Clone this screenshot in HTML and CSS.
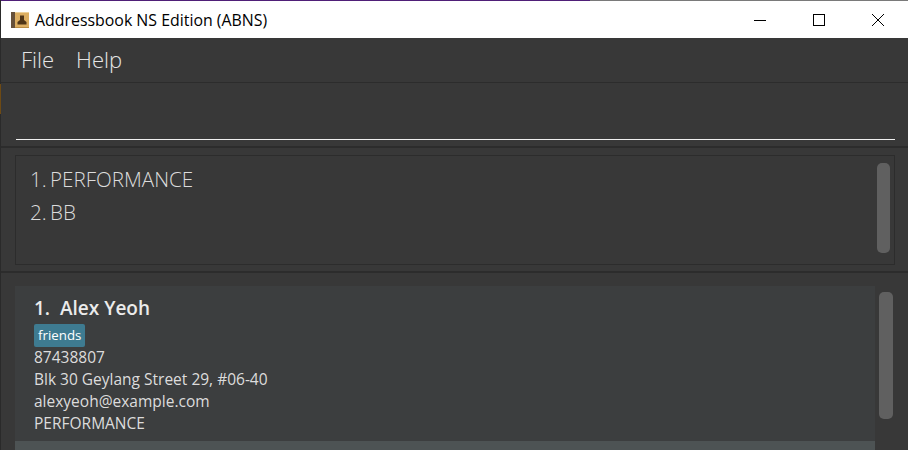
FILE: index.html
```html
<!DOCTYPE html>
<html lang="en">
<head>
    <meta charset="UTF-8">
    <title>Addressbook NS Edition (ABNS)</title>
    <link rel="stylesheet" href="styles.css">
</head>
<body>
    <div class="accent-line"><div class="accent-purple"></div></div>
    <div class="edge-sliver"></div>

    <header class="titlebar">
        <svg class="app-icon" width="18" height="16" viewBox="0 0 18 16">
            <rect x="0" y="0" width="18" height="16" fill="#dcae62"/>
            <rect x="0" y="0" width="4" height="16" fill="#66503a"/>
            <rect x="4" y="0" width="14" height="1" fill="#ecd09a"/>
            <rect x="4" y="15" width="14" height="1" fill="#b98c45"/>
            <path d="M9 3.5H13V8L15.5 10V12.5H6.5V10L9 8Z" fill="#4f3518"/>
        </svg>
        <span class="app-title">Addressbook NS Edition (ABNS)</span>
        <div class="window-buttons">
            <svg width="14" height="14" viewBox="0 0 14 14"><path d="M1 7.5H13" stroke="#000" stroke-width="1"/></svg>
            <svg width="14" height="14" viewBox="0 0 14 14"><rect x="1.5" y="1.5" width="11" height="11" fill="none" stroke="#000" stroke-width="1"/></svg>
            <svg width="14" height="14" viewBox="0 0 14 14"><path d="M1 1L13 13M13 1L1 13" stroke="#000" stroke-width="1"/></svg>
        </div>
    </header>

    <nav class="menubar">
        <span class="menu-item">File</span>
        <span class="menu-item">Help</span>
    </nav>

    <section class="command-pane">
        <div class="command-input"></div>
    </section>

    <section class="result-pane">
        <div class="result-box">
            <div class="result-text">
                <p>1. PERFORMANCE</p>
                <p>2. BB</p>
            </div>
            <div class="scroll-thumb result-thumb"></div>
        </div>
    </section>

    <section class="list-pane">
        <div class="cards">
            <article class="card">
                <h2 class="card-name">1.&nbsp; Alex Yeoh</h2>
                <div class="tags"><span class="tag">friends</span></div>
                <p class="card-line">87438807</p>
                <p class="card-line">Blk 30 Geylang Street 29, #06-40</p>
                <p class="card-line">alexyeoh@example.com</p>
                <p class="card-line">PERFORMANCE</p>
            </article>
            <div class="card-next"></div>
        </div>
        <div class="scroll-thumb list-thumb"></div>
    </section>
</body>
</html>
```

FILE: styles.css
```css
html, body {
    height: 100%;
}

body {
    margin: 0;
    overflow: hidden;
    display: flex;
    flex-direction: column;
    font-family: "Open Sans", "Noto Sans", sans-serif;
    background-color: #383838;
    border-left: 1px solid #2a2a2a;
    box-sizing: border-box;
}

p, h2 {
    margin: 0;
}

.accent-line {
    height: 1px;
    margin-left: -1px;
    background-color: #7a7a7a;
}

.accent-purple {
    width: 590px;
    height: 1px;
    background-color: #4f1f78;
}

/* bit of the window behind, shows through at the left edge */
.edge-sliver {
    position: absolute;
    left: 0;
    top: 84px;
    width: 1px;
    height: 30px;
    background-color: #6e4a14;
}

.titlebar {
    height: 37px;
    background-color: #ffffff;
    display: flex;
    align-items: center;
    padding-left: 10px;
    flex-shrink: 0;
}

.app-icon {
    margin-right: 6px;
}

.app-title {
    font-family: "Open Sans", sans-serif;
    font-size: 15.9px;
    color: #000000;
}

.window-buttons {
    margin-left: auto;
    display: flex;
    gap: 45px;
    padding-right: 23px;
    margin-top: 1px;
}

.menubar {
    height: 42px;
    padding: 0 0 2px 20px;
    flex-shrink: 0;
    display: flex;
    align-items: center;
    gap: 22px;
    border-bottom: 1px solid #2c2c2c;
    box-sizing: content-box;
}

.menu-item {
    font-size: 22px;
    font-weight: 300;
    color: #e6e6e6;
}

.command-pane {
    height: 65px;
    flex-shrink: 0;
    padding: 0 13px 0 15px;
    border-bottom: 2px solid #2c2c2c;
    box-sizing: border-box;
}

.command-input {
    height: 56px;
    border-bottom: 1px solid #f0f0f0;
}

.result-pane {
    height: 125px;
    flex-shrink: 0;
    padding: 7px 13px 6px 14px;
    border-bottom: 2px solid #2c2c2c;
    box-sizing: border-box;
}

.result-box {
    height: 110px;
    box-sizing: border-box;
    border: 1px solid #2c2c2c;
    display: flex;
    justify-content: space-between;
    padding: 7px 4px 0 14px;
}

.result-text p {
    font-size: 20.6px;
    font-weight: 300;
    line-height: 33px;
    word-spacing: -2px;
    color: #dcdcdc;
}

.scroll-thumb {
    background-color: #606060;
    border-radius: 5px;
    width: 13px;
}

.result-thumb {
    height: 90px;
}

.list-pane {
    flex: 1;
    display: flex;
    padding: 13px 15px 0 14px;
    gap: 4px;
    min-height: 0;
}

.cards {
    width: 860px;
    flex-shrink: 0;
}

.card {
    height: 155px;
    box-sizing: border-box;
    background-color: #3c3e3f;
    padding: 9px 19px 0;
}

.card-next {
    height: 9px;
    background-color: #4d5354;
}

.card-name {
    font-size: 19px;
    font-weight: 600;
    line-height: 26px;
    color: #ebebeb;
}

.tags {
    margin: 3px 0 -1px;
    display: flex;
}

.tag {
    background-color: #3e7b91;
    color: #ffffff;
    font-size: 13.3px;
    line-height: 23px;
    padding: 0 4px;
    border-radius: 2px;
}

.card-line {
    font-size: 15.5px;
    line-height: 22px;
    color: #dcdcdc;
}

.list-thumb {
    height: 127px;
    margin-top: 6px;
    width: 14px;
}
```
